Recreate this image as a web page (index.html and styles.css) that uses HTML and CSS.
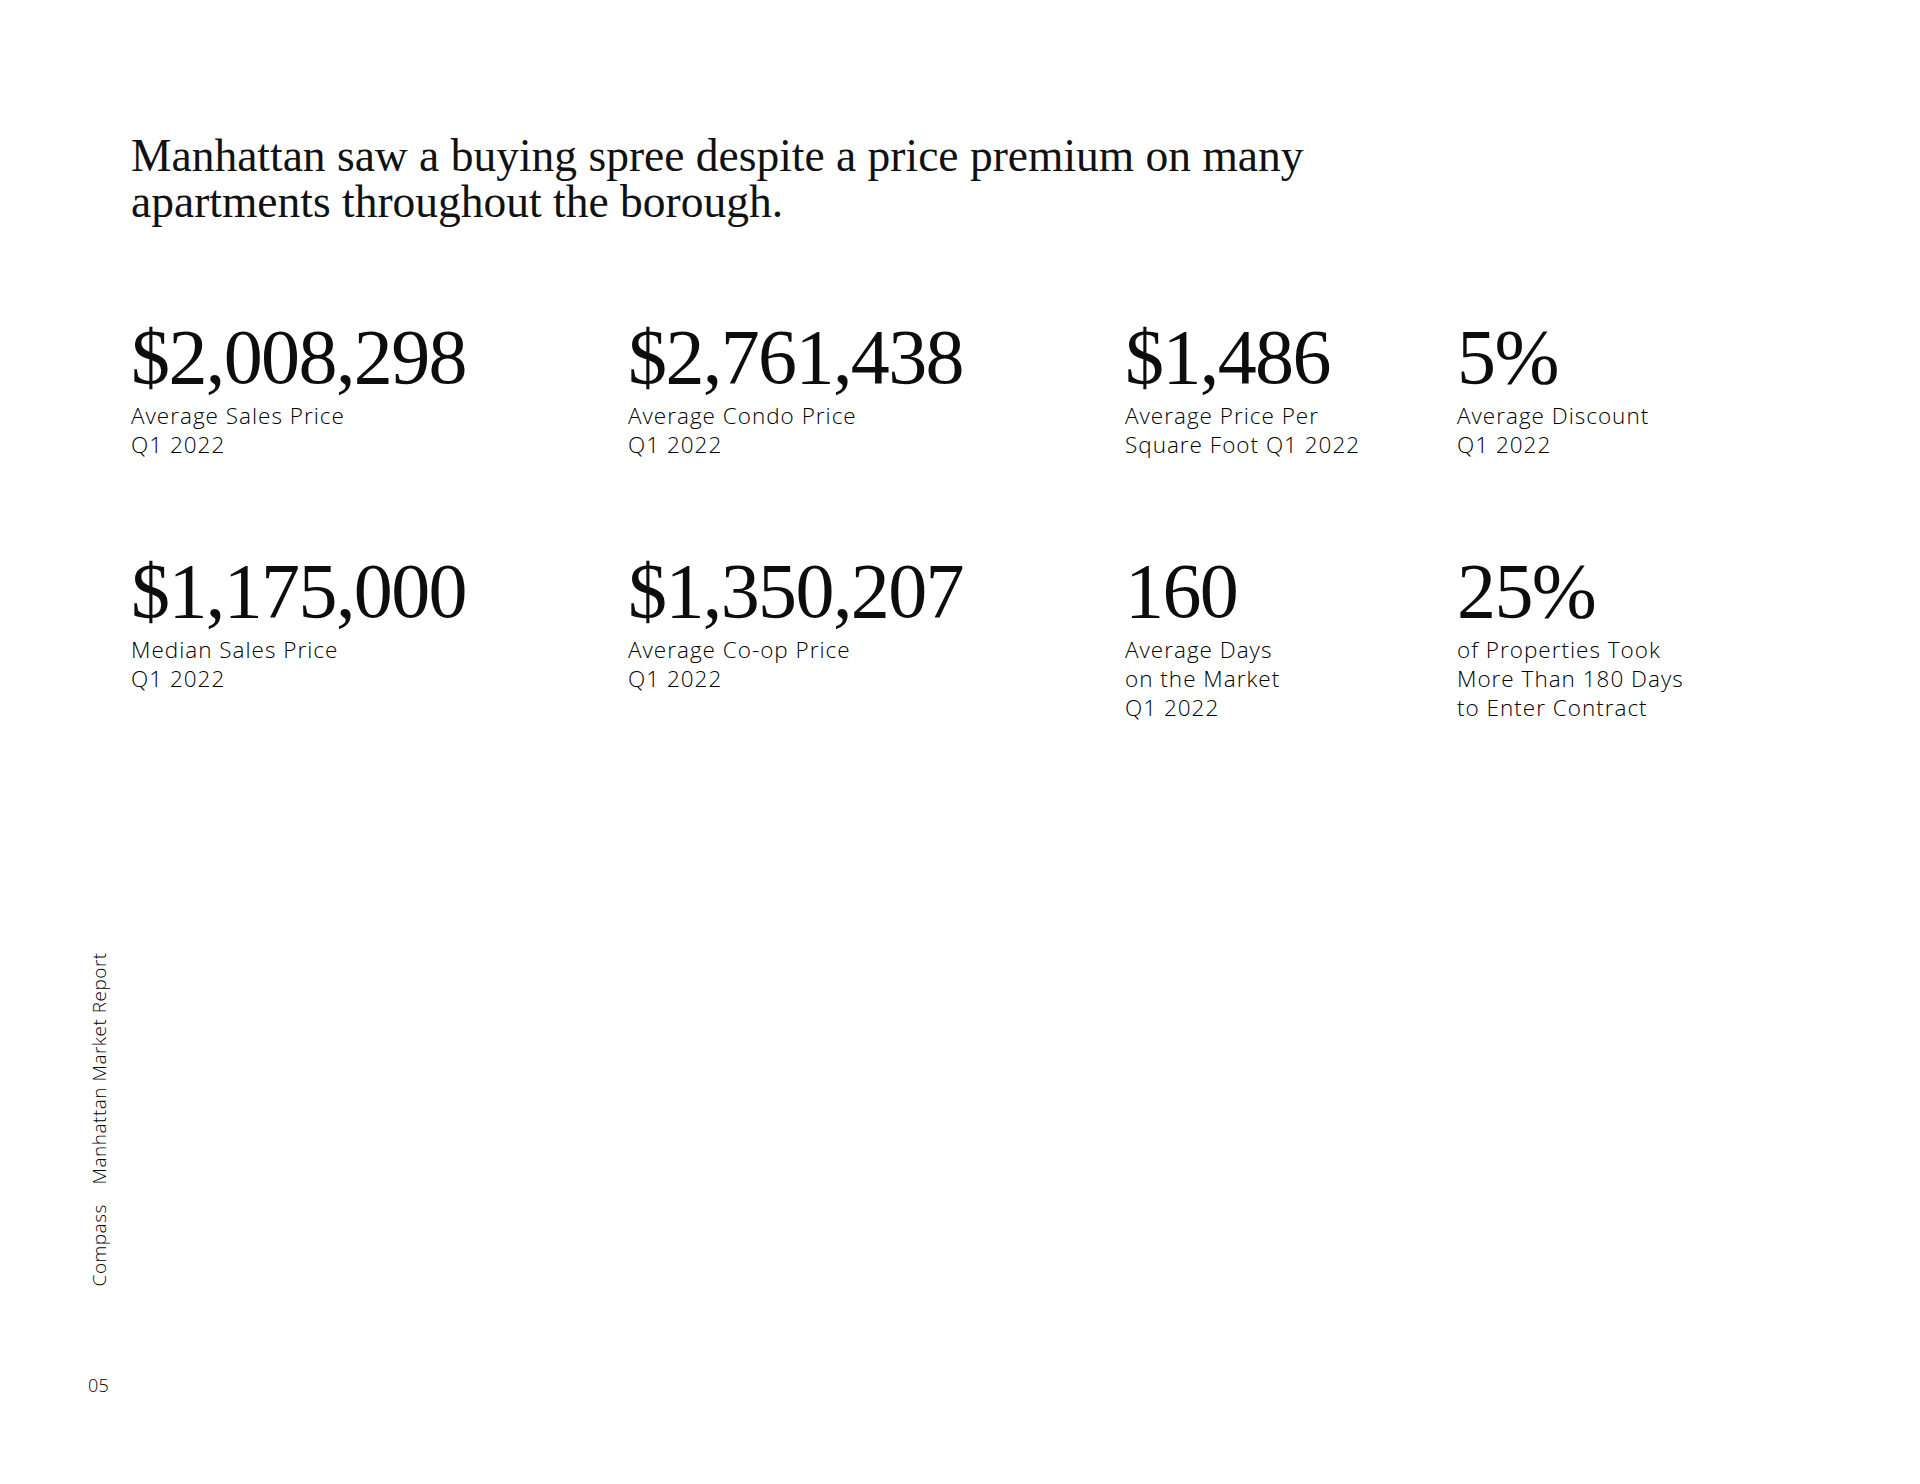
FILE: index.html
```html
<!DOCTYPE html>
<html lang="en">
<head>
<meta charset="utf-8">
<title>Compass Manhattan Market Report</title>
<link rel="stylesheet" href="styles.css">
</head>
<body>
<div class="page">
  <aside class="side">
    <div class="side-title"><span>Compass</span><span class="side-report">Manhattan Market Report</span></div>
    <div class="page-num">05</div>
  </aside>
  <main class="content">
    <h1 class="headline">Manhattan saw a buying spree despite a price premium on many apartments throughout the borough.</h1>
    <section class="stats">
      <div class="stat"><div class="num">$2,008,298</div><div class="label">Average Sales Price<br>Q1 2022</div></div>
      <div class="stat"><div class="num">$2,761,438</div><div class="label">Average Condo Price<br>Q1 2022</div></div>
      <div class="stat"><div class="num">$1,486</div><div class="label">Average Price Per<br>Square Foot Q1 2022</div></div>
      <div class="stat"><div class="num">5%</div><div class="label">Average Discount<br>Q1 2022</div></div>
      <div class="stat"><div class="num">$1,175,000</div><div class="label">Median Sales Price<br>Q1 2022</div></div>
      <div class="stat"><div class="num">$1,350,207</div><div class="label">Average Co-op Price<br>Q1 2022</div></div>
      <div class="stat"><div class="num">160</div><div class="label">Average Days<br>on the Market<br>Q1 2022</div></div>
      <div class="stat"><div class="num">25%</div><div class="label">of Properties Took<br>More Than 180 Days<br>to Enter Contract</div></div>
    </section>
  </main>
</div>
</body>
</html>
```

FILE: styles.css
```css
html, body {
  margin: 0;
  padding: 0;
  background: #ffffff;
}

body {
  width: 1920px;
  height: 1484px;
  overflow: hidden;
  color: #111111;
}

.page {
  display: flex;
  height: 1484px;
}

.side {
  width: 131px;
  flex: 0 0 131px;
  display: flex;
  flex-direction: column;
  justify-content: flex-end;
  align-items: flex-start;
  padding-left: 88px;
  padding-bottom: 88px;
  box-sizing: border-box;
  font-family: "Open Sans", "Liberation Sans", sans-serif;
  font-weight: 300;
  font-size: 19px;
  line-height: 22px;
  color: #000000;
}

.side-title {
  writing-mode: vertical-rl;
  transform: rotate(180deg);
  letter-spacing: 0.5px;
  white-space: nowrap;
}

.side-report {
  margin-inline-start: 20px;
}

.page-num {
  margin-top: 88px;
  font-size: 18px;
  letter-spacing: 0.3px;
}

.content {
  flex: 1;
  padding-top: 133px;
}

.headline {
  margin: 0;
  max-width: 1260px;
  font-family: "Liberation Serif", "Times New Roman", serif;
  font-weight: 400;
  font-size: 45.5px;
  line-height: 46px;
  color: #111111;
}

.stats {
  display: grid;
  grid-template-columns: 497px 497px 332px 1fr;
  row-gap: 93px;
  margin-top: 93px;
}

.num {
  font-family: "Liberation Serif", "Times New Roman", serif;
  font-size: 78px;
  line-height: 78px;
  letter-spacing: -1.6px;
  color: #0d0d0d;
}

.label {
  margin-top: 5px;
  font-family: "Open Sans", "Liberation Sans", sans-serif;
  font-weight: 300;
  font-size: 22.5px;
  line-height: 29px;
  letter-spacing: 1px;
  color: #000000;
}
```
